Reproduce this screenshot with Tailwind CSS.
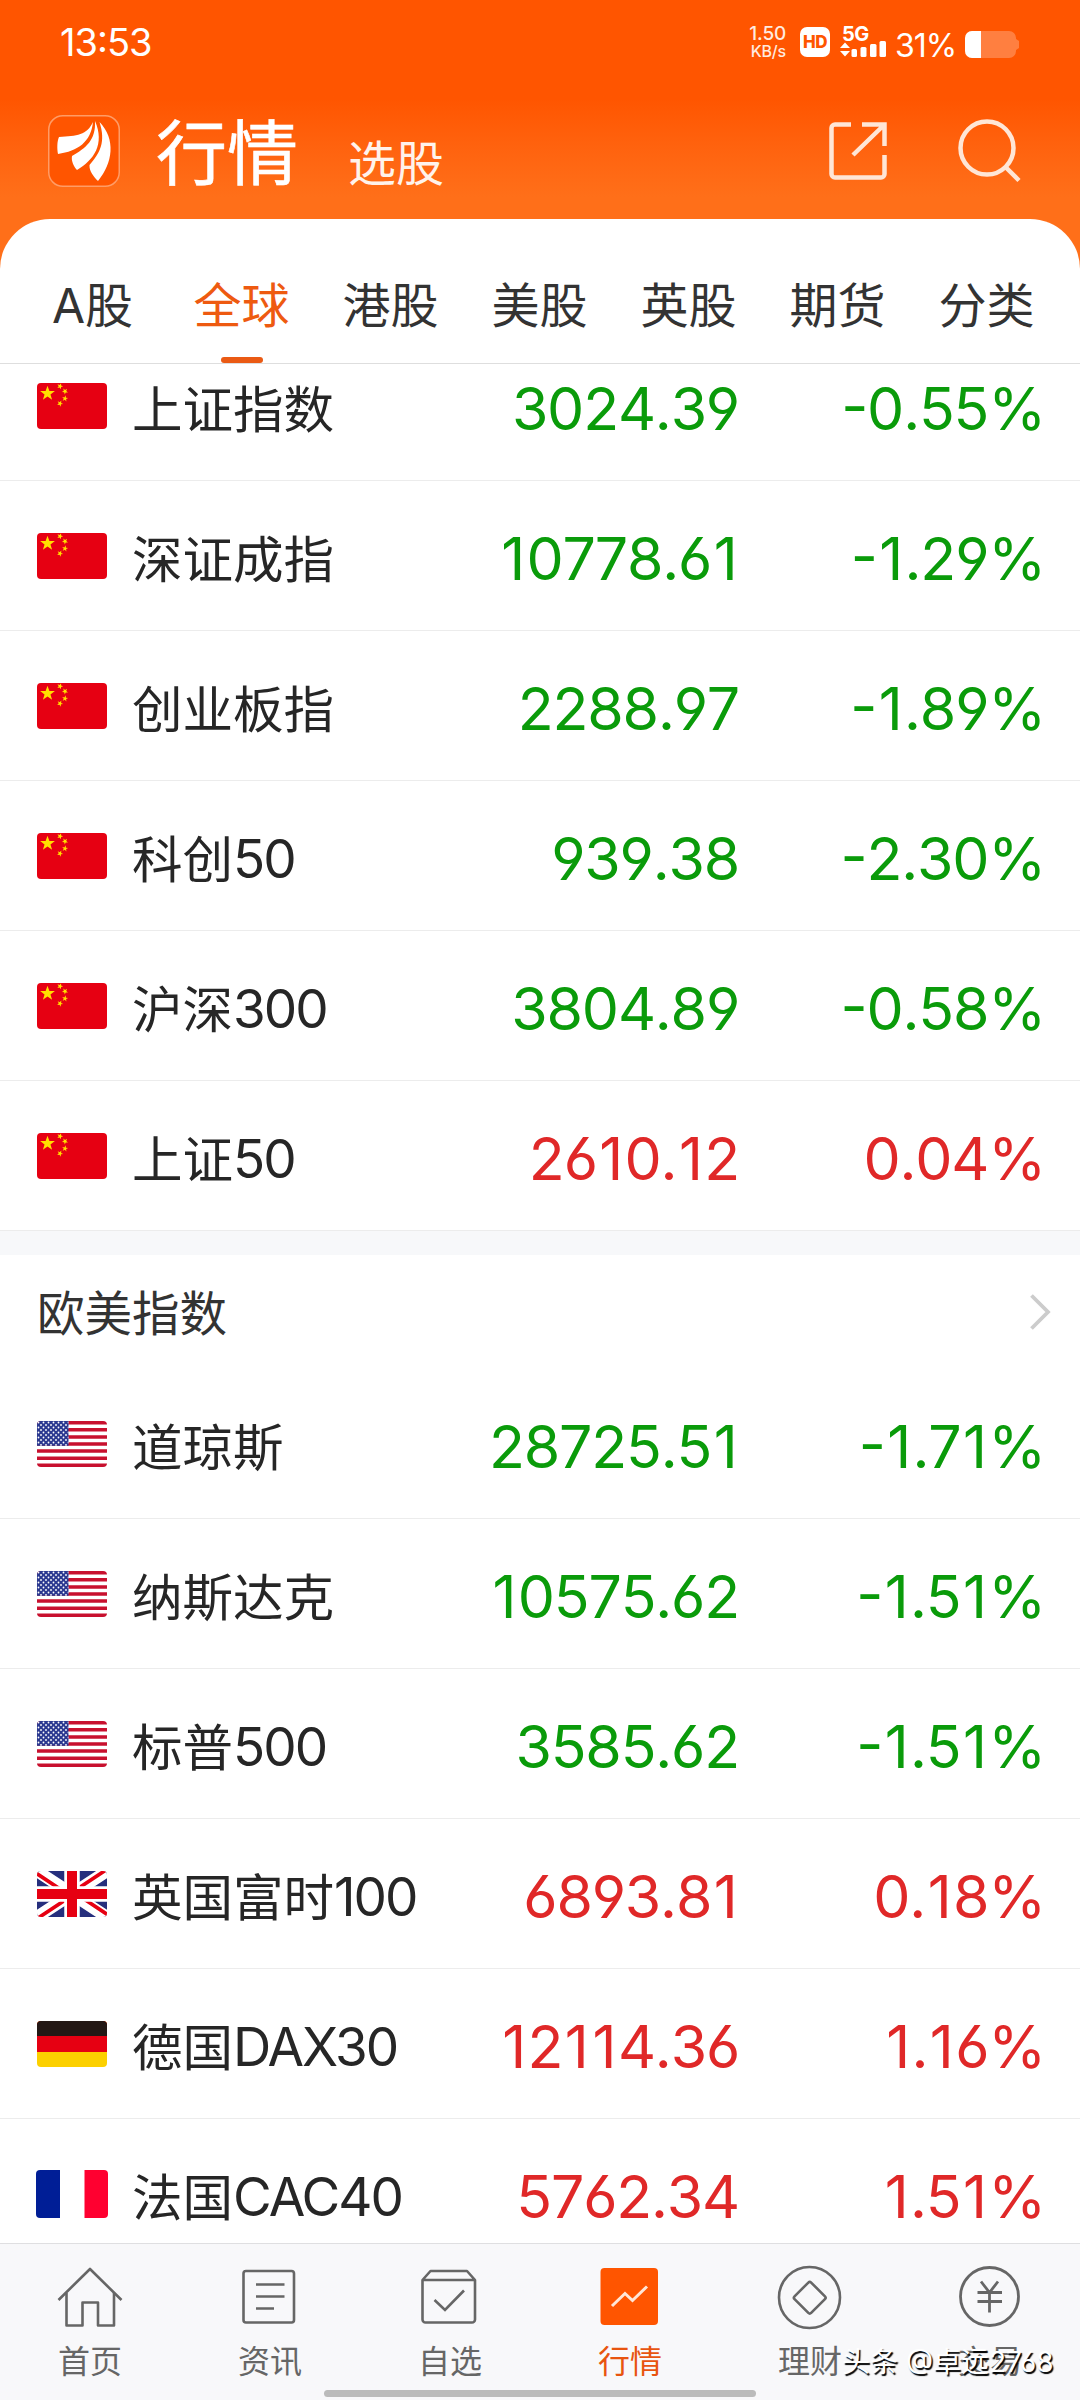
<!DOCTYPE html>
<html lang="zh-CN">
  <head>
    <meta charset="UTF-8" />
    <meta name="viewport" content="width=device-width, initial-scale=1.0" />
    <title>行情</title>
    <script src="https://cdn.jsdelivr.net/npm/@tailwindcss/browser@4"></script>
  </head>

  <body class="bg-white font-['Inter','Noto_Sans_CJK_SC',sans-serif] [font-feature-settings:'cv03','cv04','case']">

    <!-- flags -->
    <svg class="absolute w-0 h-0">
      <defs>
        <polygon id="star" points="0,-10 2.4,-3.1 9.5,-3.1 3.8,1.2 5.9,8.1 0,4 -5.9,8.1 -3.8,1.2 -9.5,-3.1 -2.4,-3.1" />
        <pattern id="dots" width="5" height="5" patternUnits="userSpaceOnUse">
          <circle cx="1.5" cy="1.5" r="0.9" fill="#fff" />
          <circle cx="4" cy="4" r="0.9" fill="#fff" />
        </pattern>
        <symbol id="flag-cn" viewBox="0 0 70 46">
          <rect width="70" height="46" fill="#e60012" />
          <g fill="#ffe100">
            <use href="#star" transform="translate(10.500 10.500) scale(.78)" />
            <use href="#star" transform="translate(23 3.200) rotate(20) scale(.32)" />
            <use href="#star" transform="translate(28 8.300) rotate(40) scale(.32)" />
            <use href="#star" transform="translate(28 15.500) rotate(10) scale(.32)" />
            <use href="#star" transform="translate(23 20.500) rotate(25) scale(.32)" />
          </g>
        </symbol>
        <symbol id="flag-us" viewBox="0 0 70 46">
          <rect width="70" height="46" fill="#fff" />
          <path d="M0 1.770H70M0 8.850H70M0 15.920H70M0 23H70M0 30.080H70M0 37.150H70M0 44.230H70" stroke="#c8102e" stroke-width="3.540" />
          <rect width="31.500" height="24.800" fill="#2b3990" />
          <rect width="31.500" height="24.800" fill="url(#dots)" />
        </symbol>
        <symbol id="flag-gb" viewBox="0 0 70 46">
          <rect width="70" height="46" fill="#262f7d" />
          <path d="M0 0L70 46M70 0L0 46" stroke="#fff" stroke-width="12" />
          <path d="M-1 2L35 26M71 44L35 20M69 -1L35 21.500M1 47L35 24.500" stroke="#e60012" stroke-width="3.800" />
          <path d="M35 0V46M0 23H70" stroke="#fff" stroke-width="15.500" />
          <path d="M35 0V46M0 23H70" stroke="#e60012" stroke-width="10" />
        </symbol>
        <symbol id="flag-de" viewBox="0 0 70 46">
          <rect width="70" height="46" fill="#fcd000" />
          <rect width="70" height="31" fill="#e60012" />
          <rect width="70" height="15" fill="#231815" />
        </symbol>
        <symbol id="flag-fr" viewBox="0 0 72 48">
          <rect width="72" height="48" fill="#fff" />
          <rect width="24" height="48" fill="#001e96" />
          <rect x="48.500" width="23.500" height="48" fill="#ff0030" />
        </symbol>
      </defs>
    </svg>

    <div class="w-[1080px] h-[2400px] flex flex-col overflow-hidden relative bg-[#ff6f19]">

      <!-- header -->
      <header class="h-[219px] shrink-0 flex flex-col text-white bg-linear-to-b from-[#ff5500] from-45% to-[#ff6f19] to-90%">

        <!-- status bar -->
        <div class="h-[84px] flex items-center pl-[60px] pr-[61px]">
          <span class="text-[38px] leading-[84px] tracking-[-1px]">13:53</span>
          <div class="ml-auto flex items-center">
            <div class="w-9 flex flex-col items-end text-[#ffeadf] font-medium">
              <span class="text-[19px] leading-[18px] tracking-[-0.2px]">1.50</span>
              <span class="text-[16px] leading-[17px] tracking-[-0.2px]">KB/s</span>
            </div>
            <div class="ml-3.5 w-[30px] h-[30px] rounded-[7px] bg-white text-[#ff5500] text-[17px] leading-[31px] font-extrabold text-center tracking-[-0.5px]">HD</div>
            <div class="ml-2.5 w-[46px] h-[30px] flex flex-col justify-between">
              <span class="pl-0.5 text-[20px] leading-[14px] font-bold tracking-[-0.5px]">5G</span>
              <svg class="w-[46px] h-4" viewBox="0 0 46 16" fill="#fff">
                <path d="M0 7L5 1.500L10 7ZM0 10L5 15.500L10 10Z" />
                <rect x="11.500" y="8" width="5.500" height="8" rx="1.500" />
                <rect x="20.500" y="6" width="6" height="10" rx="1.500" />
                <rect x="30" y="3" width="6.500" height="13" rx="1.500" />
                <rect x="39.500" y="0" width="6.500" height="16" rx="1.500" />
              </svg>
            </div>
            <span class="ml-[9px] w-[60px] mt-2 text-[32px] leading-[34px] tracking-[-1px] whitespace-nowrap">31%</span>
            <svg class="ml-[10px] w-[54px] h-[27px] mt-1" viewBox="0 0 54 27">
              <path d="M7 0H44a7 7 0 0 1 7 7V8L54 10V17L51 19V20a7 7 0 0 1-7 7H7a7 7 0 0 1-7-7V7a7 7 0 0 1 7-7Z" fill="#fff" fill-opacity=".25" />
              <path d="M16 0H7a7 7 0 0 0-7 7V20a7 7 0 0 0 7 7H16Z" fill="#fff" />
            </svg>
          </div>
        </div>

        <!-- title -->
        <div class="h-[135px] flex items-start pl-12 pr-[59px]">
          <svg class="mt-[31px] w-[72px] h-[72px]" viewBox="0 0 72 72">
            <rect x=".75" y=".75" width="70.500" height="70.500" rx="14" fill="#ff5500" stroke="#ff9c66" stroke-width="1.500" />
            <g fill="#fff">
              <path d="M45 7C39 20 29 21 11 22C9 26 9 34 10 39C30 36 43 27 45 7Z" />
              <path d="M47 6C48 25 38 33 24 41C23 46 26 52 29 55C46 45 57 29 47 6Z" />
              <path d="M51.500 7C58 27 52 38 41.500 50C41 56 46 62 50 66C65 48 68 24 51.500 7Z" />
            </g>
          </svg>
          <h1 class="ml-9 mt-[33px] text-[71px] leading-[72px] [-webkit-text-stroke:0.6px_#fff]">行情</h1>
          <span class="ml-[50px] mt-[52px] text-[48px] leading-[56px] text-[#fff3ec]">选股</span>
          <svg class="ml-auto mt-[37px] w-[60px] h-[60px]" viewBox="0 0 60 60" fill="none" stroke="#ffe6d6" stroke-width="4.500">
            <path d="M23 3.500H7a3.500 3.500 0 0 0-3.500 3.500V53a3.500 3.500 0 0 0 3.500 3.500H53a3.500 3.500 0 0 0 3.500-3.500V34" />
            <path d="M34 3.500H56.500V25M56 4L25 34" />
          </svg>
          <svg class="ml-[69px] mt-[34px] w-[64px] h-[66px]" viewBox="0 0 64 66" fill="none" stroke="#ffe6d6" stroke-width="4.500">
            <circle cx="30" cy="30" r="26.500" />
            <path d="M48.500 49L62 62.500" />
          </svg>
        </div>
      </header>

      <!-- tabs -->
      <nav class="h-[145px] shrink-0 bg-white rounded-t-[50px] border-b border-[#dedede] pl-[18px] pr-[19px] grid grid-cols-7 text-center text-[48px] text-[#333]">
        <div class="pt-[51px] leading-[72px]">A股</div>
        <div class="pt-[51px] leading-[72px] text-[#ee5a10] flex flex-col items-center">
          全球
          <span class="mt-[15px] w-[42px] h-[6px] rounded-full bg-[#ea5a14]"></span>
        </div>
        <div class="pt-[51px] leading-[72px]">港股</div>
        <div class="pt-[51px] leading-[72px]">美股</div>
        <div class="pt-[51px] leading-[72px]">英股</div>
        <div class="pt-[51px] leading-[72px]">期货</div>
        <div class="pt-[51px] leading-[72px]">分类</div>
      </nav>

      <!-- list, scrolled a little under the tabs -->
      <main class="h-[1879px] shrink-0 overflow-hidden bg-white">
        <div id="asia" class="-mt-[33px]"></div>
        <div class="h-6 bg-[#f7f8fa]"></div>
        <div class="h-[114px] flex items-center pl-[37px] pr-7">
          <h2 class="mt-1 text-[47.500px] leading-[72px] text-[#333]">欧美指数</h2>
          <svg class="ml-auto w-6 h-9" viewBox="0 0 24 36" fill="none" stroke="#ccc" stroke-width="3.800">
            <path d="M3.500 1.500L20 18L3.500 34.500" />
          </svg>
        </div>
        <div id="west"></div>
      </main>

      <!-- bottom bar -->
      <footer class="h-[157px] shrink-0 bg-[#f8f8fa] border-t border-[#dfdfe1] grid grid-cols-6 text-center text-[32px] leading-[48px] text-[#666]">
        <div class="flex flex-col items-center pt-[21px]">
          <svg class="w-[66px] h-[66px] mr-px" viewBox="0 0 66 66" fill="none" stroke="#666" stroke-width="2.600" stroke-linejoin="round">
            <path d="M1.500 35L33 4L64.500 35" />
            <path d="M9.500 28V60.500H25.500V37.500H41V60.500H57V28" />
          </svg>
          <span class="mt-[7px]">首页</span>
        </div>
        <div class="flex flex-col items-center pt-[21px]">
          <svg class="w-[66px] h-[66px] mr-0.5" viewBox="0 0 66 66" fill="none" stroke="#666" stroke-width="2.600">
            <rect x="7.500" y="6" width="50.500" height="51.500" rx="2.500" />
            <path d="M20 19.500H48.500M20 31.500H48.500M20 43.500H38" />
          </svg>
          <span class="mt-[7px]">资讯</span>
        </div>
        <div class="flex flex-col items-center pt-[21px]">
          <svg class="w-[66px] h-[66px] mr-0.5" viewBox="0 0 66 66" fill="none" stroke="#666" stroke-width="2.600" stroke-linejoin="round">
            <path d="M6.500 15L14.500 6H51L59 15V54.500a3 3 0 0 1-3 3H9.500a3 3 0 0 1-3-3ZM6.500 15H59" />
            <path d="M18.500 35L29 45L48 25.500" stroke-linejoin="miter" />
          </svg>
          <span class="mt-[7px]">自选</span>
        </div>
        <div class="flex flex-col items-center pt-[21px] text-[#e8540f]">
          <svg class="w-[66px] h-[66px] mr-0.5" viewBox="0 0 66 66" fill="none">
            <rect x="4.500" y="3" width="57.500" height="57" rx="4" fill="#ff5500" />
            <path d="M16 41L29 28.500L36.500 35.500L51 21.500" stroke="#ffe6d6" stroke-width="3" />
          </svg>
          <span class="mt-[7px]">行情</span>
        </div>
        <div class="flex flex-col items-center pt-[21px]">
          <svg class="w-[66px] h-[66px]" viewBox="0 0 66 66" fill="none" stroke="#666" stroke-width="2.600">
            <circle cx="32.500" cy="32.500" r="30.500" />
            <rect x="21" y="21" width="23.500" height="23.500" rx="2" transform="rotate(45 32.750 32.750)" />
          </svg>
          <span class="mt-[7px]">理财</span>
        </div>
        <div class="flex flex-col items-center pt-[21px]">
          <svg class="w-[66px] h-[66px]" viewBox="0 0 66 66" fill="none" stroke="#666" stroke-width="2.800">
            <circle cx="32.500" cy="31.500" r="29" />
            <path d="M24 16.500L32.500 27.500L41 16.500M32.500 27V47.500M20.500 27.500H45M20.500 36.500H45" />
          </svg>
          <span class="mt-[7px]">交易</span>
        </div>
      </footer>

      <!-- home indicator -->
      <div class="absolute left-[324px] bottom-[3px] w-[432px] h-[7px] rounded-full bg-[#bbb]"></div>

      <!-- watermark -->
      <div class="absolute left-[842px] top-[2342px] text-[28px] leading-[40px] text-white whitespace-nowrap [text-shadow:1.5px_1.5px_1px_#000]">头条 @卓远2768</div>
    </div>

    <script>
      // flag, name, latin part of the name, price, change
      const asia = [
        ["cn", "上证指数", "", "3024.39", "-0.55%"],
        ["cn", "深证成指", "", "10778.61", "-1.29%"],
        ["cn", "创业板指", "", "2288.97", "-1.89%"],
        ["cn", "科创", "50", "939.38", "-2.30%"],
        ["cn", "沪深", "300", "3804.89", "-0.58%"],
        ["cn", "上证", "50", "2610.12", "0.04%"],
      ];
      const west = [
        ["us", "道琼斯", "", "28725.51", "-1.71%"],
        ["us", "纳斯达克", "", "10575.62", "-1.51%"],
        ["us", "标普", "500", "3585.62", "-1.51%"],
        ["gb", "英国富时", "100", "6893.81", "0.18%"],
        ["de", "德国", "DAX30", "12114.36", "1.16%"],
        ["fr", "法国", "CAC40", "5762.34", "1.51%"],
      ];

      // the 1 is narrow, give it some air
      const digits = (text) => text.replace(/1/g, '<span class="px-[2.5px]">1</span>');

      function renderRows(id, rows) {
        document.getElementById(id).innerHTML = rows.map(([flag, name, latin, price, change]) => {
          const color = change.startsWith("-") ? "text-[#0a9b0a]" : "text-[#e02828]";
          const size = flag === "fr" ? "w-[72px] h-12 -mx-px" : "w-[70px] h-[46px]";
          return `
            <div class="h-[150px] border-b border-[#ececec] flex items-center pl-[37px] pr-[35px]">
              <svg class="${size} shrink-0 rounded-[4px]"><use href="#flag-${flag}" /></svg>
              <div class="ml-[25px] mt-[7px] w-[330px] text-[50.500px] leading-[72px] text-[#262626] whitespace-nowrap">${name}<span class="text-[53px] tracking-[-2px]">${latin}</span></div>
              <div class="mt-[7px] w-[277px] text-right text-[59px] leading-[72px] tracking-[-1.2px] [font-kerning:none] ${color}">${digits(price)}</div>
              <div class="mt-[7px] ml-auto text-[59px] leading-[72px] tracking-[-1.2px] [font-kerning:none] ${color}">${digits(change)}</div>
            </div>`;
        }).join("");
      }

      renderRows("asia", asia);
      renderRows("west", west);
    </script>
  </body>
</html>
